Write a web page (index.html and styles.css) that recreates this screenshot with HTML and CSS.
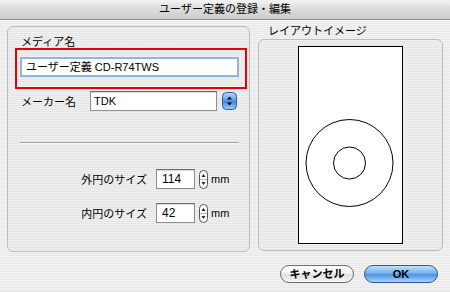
FILE: index.html
```html
<!DOCTYPE html>
<html lang="ja">
<head>
    <meta charset="UTF-8">
    <title>ユーザー定義の登録・編集</title>
    <link rel="stylesheet" href="styles.css">
</head>
<body>
    <div class="window">
        <div class="titlebar">ユーザー定義の登録・編集</div>
        <div class="main">
            <div class="group left">
                <div class="media-label">メディア名</div>
                <div class="highlight">
                    <div class="field focus">ユーザー定義 CD-R74TWS</div>
                </div>
                <div class="maker-row">
                    <div class="maker-label">メーカー名</div>
                    <div class="field maker">TDK</div>
                    <svg class="popup" width="15" height="18" viewBox="0 0 15 18">
                        <defs>
                            <linearGradient id="pb" x1="0" y1="0" x2="0" y2="1">
                                <stop offset="0" stop-color="#b9dbfb"/>
                                <stop offset="0.45" stop-color="#5d9fe8"/>
                                <stop offset="0.55" stop-color="#3f87de"/>
                                <stop offset="1" stop-color="#9fd0fb"/>
                            </linearGradient>
                        </defs>
                        <rect x="0.5" y="0.5" width="14" height="17" rx="4" fill="url(#pb)" stroke="#35619a"/>
                        <path d="M7.5 4.5 L10 7.5 L5 7.5 Z" fill="#000"/>
                        <path d="M7.5 13.5 L10 10.5 L5 10.5 Z" fill="#000"/>
                    </svg>
                </div>
                <div class="separator"></div>
                <div class="size-row first">
                    <div class="size-label">外円のサイズ</div>
                    <div class="field size">114</div>
                    <svg class="stepper" width="9" height="19" viewBox="0 0 9 19">
                        <rect x="0.5" y="0.5" width="8" height="18" rx="4" fill="#fff" stroke="#555"/>
                        <line x1="1" y1="9.5" x2="8" y2="9.5" stroke="#bbb"/>
                        <path d="M4.5 4 L6.5 7 L2.5 7 Z" fill="#222"/>
                        <path d="M4.5 15 L6.5 12 L2.5 12 Z" fill="#222"/>
                    </svg>
                    <span class="unit">mm</span>
                </div>
                <div class="size-row">
                    <div class="size-label">内円のサイズ</div>
                    <div class="field size">42</div>
                    <svg class="stepper" width="9" height="19" viewBox="0 0 9 19">
                        <rect x="0.5" y="0.5" width="8" height="18" rx="4" fill="#fff" stroke="#555"/>
                        <line x1="1" y1="9.5" x2="8" y2="9.5" stroke="#bbb"/>
                        <path d="M4.5 4 L6.5 7 L2.5 7 Z" fill="#222"/>
                        <path d="M4.5 15 L6.5 12 L2.5 12 Z" fill="#222"/>
                    </svg>
                    <span class="unit">mm</span>
                </div>
            </div>
            <div class="right">
                <div class="layout-label">レイアウトイメージ</div>
                <div class="group preview">
                    <div class="sheet">
                        <svg width="103" height="196" viewBox="0 0 103 196">
                            <circle cx="50.5" cy="116" r="43.5" fill="none" stroke="#000"/>
                            <circle cx="50.5" cy="116" r="16" fill="none" stroke="#000"/>
                        </svg>
                    </div>
                </div>
            </div>
        </div>
        <div class="buttons">
            <div class="btn cancel">キャンセル</div>
            <div class="btn ok">OK</div>
        </div>
    </div>
</body>
</html>
```
FILE: styles.css
```css
* {
    margin: 0;
    padding: 0;
    box-sizing: border-box;
}
html, body {
    width: 450px;
    height: 292px;
    overflow: hidden;
}
body {
    font-family: "Liberation Sans", "Noto Sans CJK JP", sans-serif;
    font-size: 11px;
    color: #000;
    background: repeating-linear-gradient(to bottom, #f3f3f3 0, #f3f3f3 1px, #e8e8e8 1px, #e8e8e8 2px);
}
.window {
    height: 292px;
    display: flex;
    flex-direction: column;
}
.titlebar {
    height: 20px;
    line-height: 19px;
    text-align: center;
    border-radius: 6px 6px 0 0;
    border-bottom: 1px solid #8c8c8c;
    background: linear-gradient(to bottom, #f4f4f4 0%, #dcdcdc 45%, #cdcdcd 100%);
}
.main {
    display: flex;
    padding: 6px 0 0 7px;
}
.group {
    border: 1px solid #bdbdbd;
    border-radius: 6px;
    background: rgba(0, 0, 0, 0.012);
}
.left {
    width: 243px;
    height: 226px;
    display: flex;
    flex-direction: column;
    padding-top: 9px;
}
.media-label {
    margin-left: 13px;
    height: 12px;
    line-height: 12px;
}
.highlight {
    margin-left: 7px;
    width: 232px;
    height: 41px;
    border: 2px solid #e60000;
    padding: 7px 0 0 3px;
}
.field {
    background: #fff;
    border: 1px solid #8e8e8e;
    border-top-color: #6a6a6a;
    box-shadow: inset 0 1px 1px rgba(0, 0, 0, 0.15);
    height: 20px;
    line-height: 18px;
    padding-left: 3px;
}
.focus {
    width: 219px;
    border: 2px solid #8fb6df;
    box-shadow: none;
    line-height: 16px;
    padding-left: 4px;
}
.maker-row {
    display: flex;
    align-items: center;
    margin-top: 2px;
}
.maker-label {
    margin-left: 13px;
    width: 69px;
}
.maker {
    width: 127px;
}
.popup {
    margin-left: 5px;
}
.separator {
    margin: 31px 0 0 12px;
    width: 219px;
    height: 2px;
    border-top: 1px solid #a2a2a2;
    border-bottom: 1px solid #f8f8f8;
}
.size-row {
    display: flex;
    align-items: center;
    margin-top: 14px;
}
.size-row.first {
    margin-top: 25px;
}
.size-label {
    width: 139px;
    text-align: right;
    margin-right: 9px;
}
.size {
    width: 39px;
    font-size: 12px;
    padding-left: 5px;
}
.stepper {
    margin-left: 4px;
}
.unit {
    margin-left: 3px;
}
.right {
    margin-left: 8px;
    width: 185px;
    display: flex;
    flex-direction: column;
}
.layout-label {
    height: 13px;
    line-height: 11px;
    padding-left: 10px;
}
.preview {
    height: 212px;
    display: flex;
    justify-content: center;
    padding-top: 6px;
}
.sheet {
    width: 105px;
    height: 198px;
    background: #fff;
    border: 1px solid #000;
}
.sheet svg {
    display: block;
}
.buttons {
    display: flex;
    justify-content: flex-end;
    gap: 10px;
    padding-right: 12px;
    margin-top: 13px;
}
.btn {
    width: 74px;
    height: 18px;
    line-height: 16px;
    border-radius: 9px;
    text-align: center;
    font-weight: bold;
}
.cancel {
    border: 1px solid #6e6e6e;
    background: linear-gradient(to bottom, #ffffff 0%, #f2f2f2 45%, #dedede 55%, #f7f7f7 100%);
}
.ok {
    border: 1px solid #2d5a94;
    background: linear-gradient(to bottom, #c4e1fc 0%, #74b0ee 45%, #4c92e2 55%, #a9d6fc 100%);
}
```
